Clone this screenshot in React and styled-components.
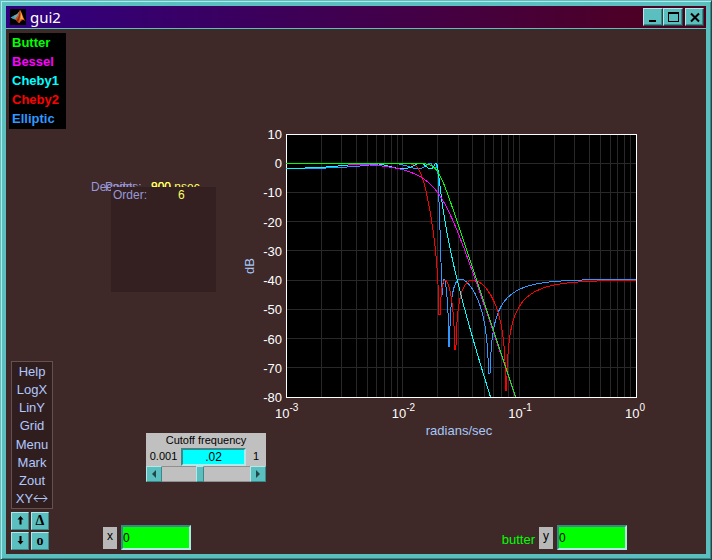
import { useState } from 'react';
import styled, { createGlobalStyle } from 'styled-components';

const GlobalStyle = createGlobalStyle`
  * {
    box-sizing: border-box;
  }
  body {
    margin: 0;
    background: #3e2828;
    font-family: "Liberation Sans", Arial, sans-serif;
    font-size: 13px;
  }
  button, input {
    font-family: inherit;
    margin: 0;
    padding: 0;
  }
`;

const Window = styled.div`
  display: flex;
  flex-direction: column;
  min-height: 100vh;
  border: 1px solid;
  border-color: #5cbfbf #204848 #204848 #5cbfbf;
  box-shadow: inset 1px 1px #b4e8e8, inset -1px -1px #3c8888;
  padding: 5px;
  background: #5cbfbf;
`;

const TitleBar = styled.header`
  display: flex;
  align-items: center;
  height: 22px;
  padding: 0 2px 0 4px;
  background: linear-gradient(to right, #300080, #50001c);
  color: #fff;
`;

const Title = styled.h1`
  flex: 1;
  margin: 0 0 0 4px;
  font: 15px/20px "Noto Sans", sans-serif;
`;

const WindowButton = styled.button`
  width: ${({ $wide }) => ($wide ? '20px' : '19px')};
  height: 18px;
  margin-left: ${({ $gap }) => ($gap ? '2px' : '0')};
  border: 1px solid;
  border-color: #b4e8e8 #204848 #204848 #b4e8e8;
  box-shadow: inset -1px -1px #3c8888;
  background: #5cbfbf;
  line-height: 0;
`;

const Body = styled.div`
  display: flex;
  flex: 1;
  margin-top: 1px;
  background: #3e2828;
`;

const Sidebar = styled.aside`
  display: flex;
  flex-direction: column;
  justify-content: space-between;
  padding: 4px 0 4px 3px;
`;

const Legend = styled.ul`
  width: 57px;
  margin: 0;
  padding: 0 0 1px 3px;
  list-style: none;
  background: #000;
  font-weight: bold;
  line-height: 19px;
`;

const LegendItem = styled.li`
  color: ${({ $color }) => $color};
`;

const Tools = styled.div`
  width: 42px;
  margin-left: 2px;
`;

const Menu = styled.nav`
  display: flex;
  flex-direction: column;
  min-height: 148px;
  margin-bottom: 3px;
  border: 1px solid #685050;
  background: #301e1e;
`;

const MenuButton = styled.button`
  display: flex;
  flex: 1;
  align-items: center;
  justify-content: center;
  border: 0;
  background: none;
  color: #b0c8ff;
  font-size: 13px;
`;

const KeyPad = styled.div`
  display: grid;
  grid-template-columns: 18px 18px;
  gap: 2px;
`;

const Key = styled.button`
  height: 18px;
  border: 1px solid;
  border-color: #b4e8e8 #3c8888 #3c8888 #b4e8e8;
  background: #5cbfbf;
  color: #000;
  font: bold 14px/14px "Liberation Serif", serif;
`;

const Main = styled.main`
  display: flex;
  flex: 1;
  flex-direction: column;
  justify-content: space-between;
  padding: 94px 0 4px;
`;

const Workspace = styled.div`
  display: grid;
  grid-template-columns: 174px 32px 1fr;
`;

const Controls = styled.div`
  grid-column: 1 / 3;
  grid-row: 1;
  z-index: 1;
  padding-top: 64px;
`;

const Info = styled.div`
  position: relative;
  width: 105px;
  height: 105px;
  margin-left: 45px;
  color: #9898d8;
  font-size: 12px;
`;

const InfoLine = styled.div`
  position: absolute;
  top: -7px;
  left: ${({ $left }) => $left};
  display: flex;
  white-space: pre;
  line-height: 14px;
`;

const InfoCard = styled.div`
  position: relative;
  display: flex;
  height: 100%;
  padding: 1px 2px;
  background: #342020;
  line-height: 14px;
`;

const InfoLabel = styled.span`
  width: ${({ $width }) => $width};
`;

const InfoValue = styled.span`
  color: #ffff60;
`;

const CutoffPanel = styled.div`
  width: 120px;
  margin: 141px 0 0 80px;
  background: #c0c0c0;
  color: #000;
  font-size: 11px;
  text-align: center;
`;

const CutoffLabel = styled.label`
  display: block;
  line-height: 15px;
`;

const CutoffRow = styled.div`
  display: grid;
  grid-template-columns: 35px 1fr 20px;
  height: 18px;
  line-height: 17px;
`;

const CutoffInput = styled.input`
  width: 100%;
  height: 18px;
  border: 2px solid;
  border-color: #3c8888 #b4e8e8 #b4e8e8 #3c8888;
  background: #00ffff;
  color: #000;
  font-size: 12px;
  text-align: center;
`;

const SliderRow = styled.div`
  display: flex;
  height: 16px;
`;

const ArrowButton = styled.button`
  width: 16px;
  border: 1px solid;
  border-color: #b4e8e8 #3c8888 #3c8888 #b4e8e8;
  background: #5cbfbf;
  line-height: 0;
`;

const Slider = styled.input`
  flex: 1;
  min-width: 0;
  appearance: none;
  border: solid #909090;
  border-width: 1px 0;
  background: #c0c0c0;

  &::-webkit-slider-thumb {
    appearance: none;
    width: 8px;
    height: 16px;
    border: 1px solid;
    border-color: #b4e8e8 #3c8888 #3c8888 #b4e8e8;
    background: #5cbfbf;
  }
`;

const Chart = styled.svg`
  display: block;
  grid-column: 2 / 4;
  grid-row: 1;
  width: 100%;
  font-size: 13px;
`;

const Readouts = styled.footer`
  display: flex;
  justify-content: space-between;
  padding: 0 79px 0 37px;
`;

const Readout = styled.div`
  display: flex;
  align-items: center;
`;

const TraceName = styled.span`
  margin-right: 4px;
  padding-top: 4px;
  color: #00ff00;
`;

const AxisLabel = styled.label`
  width: 14px;
  height: 22px;
  margin-right: 4px;
  background: #b8b8b8;
  color: #000;
  font-size: 12px;
  line-height: 19px;
  text-align: center;
`;

const AxisInput = styled.input`
  width: 70px;
  height: 25px;
  border: 2px solid;
  border-color: #3c8888 #b4e8e8 #b4e8e8 #3c8888;
  background: #00ff00;
  color: #000;
  font-size: 12px;
`;

const PLOT = { left: 46, top: 11, width: 350, height: 263 };
const ORDER = 6;
const CUTOFF = 0.02;

const toX = (w) => PLOT.left + ((Math.log10(w) + 3) / 3) * PLOT.width;
const toY = (db) => PLOT.top + ((10 - db) / 90) * PLOT.height;

const cheby = (n, x) =>
  Math.abs(x) <= 1 ? Math.cos(n * Math.acos(x)) : Math.cosh(n * Math.acosh(x));

const butter = (w) => -10 * Math.log10(1 + Math.pow(w, 2 * ORDER));

const bessel = (w) => {
  const u = w * Math.pow(10395, 1 / 6);
  const re = 10395 - 4725 * u ** 2 + 210 * u ** 4 - u ** 6;
  const im = 10395 * u - 1260 * u ** 3 + 21 * u ** 5;
  return 20 * Math.log10(10395 / Math.hypot(re, im));
};

const cheby1 = (w) => -10 * Math.log10(1 + 0.55 * cheby(ORDER, w) ** 2);

const cheby2 = (w) => -10 * Math.log10(1 + 9999 / cheby(ORDER, 1 / w) ** 2);

const rational = (w) =>
  [0.3882, 0.8565, 0.9885].reduce(
    (acc, p) => (acc * (w * w - p * p)) / (w * w - (1.073 / p) ** 2),
    1
  );
const elliptic = (w) => -10 * Math.log10(1 + 0.55 * (rational(w) / rational(1)) ** 2);

// how far down each notch is drawn, by the x where the next one begins
const floorAt = (x, floors) => floors.find(([end]) => x < end)[1];

const trace = (response, floors = [[Infinity, -80]]) => {
  const points = [];
  for (let x = PLOT.left; x <= PLOT.left + PLOT.width; x += 1) {
    const w = Math.pow(10, ((x - PLOT.left) / PLOT.width) * 3 - 3);
    const db = response(w / CUTOFF);
    points.push(`${x},${toY(Math.max(db, floorAt(x, floors))).toFixed(1)}`);
    if (db < -80 && floors.length === 1) break;
  }
  return points.join(' ');
};

const filters = [
  { name: 'Butter', color: '#00ff00', points: trace(butter) },
  { name: 'Bessel', color: '#ff00ff', points: trace(bessel) },
  { name: 'Cheby1', color: '#00ffff', points: trace(cheby1) },
  {
    name: 'Cheby2',
    color: '#ff0000',
    points: trace(cheby2, [[206, -52], [230, -64], [Infinity, -78]]),
  },
  {
    name: 'Elliptic',
    color: '#3098ff',
    points: trace(elliptic, [[205, -45], [225, -63], [Infinity, -72]]),
  },
];

const levels = [10, 0, -10, -20, -30, -40, -50, -60, -70, -80];
const decades = [-3, -2, -1, 0];
const gridX = [-3, -2, -1].flatMap((d) =>
  [1, 2, 3, 4, 5, 6, 7, 8, 9].map((n) => n * 10 ** d)
);

const menuItems = ['Help', 'LogX', 'LinY', 'Grid', 'Menu', 'Mark', 'Zout'];

const MatlabIcon = () => (
  <svg width="16" height="16" viewBox="0 0 16 16" aria-hidden="true">
    <rect width="16" height="16" fill="#000" />
    <path d="M0.5 8.5 4 6.5 6.5 7.5 5 10.5 3 10Z" fill="#4898b8" />
    <path d="M4 6.5 7 5 10 1.5 8 7 5 10.5Z" fill="#70a8b0" />
    <path d="M10 1C11 1 12.5 7 15.5 12.5 13 10 11.5 11 9.5 14 8 14.5 7 11 4.5 10.5 7.5 9.5 8.5 3 10 1Z" fill="#d85818" />
    <path d="M10 1C9.5 5 9 9 6 11.5L8 13.5C10 10 10.5 5 10 1Z" fill="#902818" />
    <path d="M10.5 2C12 5 12 8 14 11 12 9 11 10 10 11 11 8 11 5 10.5 2Z" fill="#ffb848" />
  </svg>
);

const ResponseChart = () => (
  <Chart viewBox="0 0 466 318" role="img" aria-label="Filter response">
    <g shapeRendering="crispEdges">
      <rect x={PLOT.left} y={PLOT.top} width={PLOT.width} height={PLOT.height} fill="#000" />
      <g stroke="#282828">
        {gridX.map((w) => (
          <line key={w} x1={toX(w)} x2={toX(w)} y1={PLOT.top} y2={PLOT.top + PLOT.height} />
        ))}
        {levels.map((db) => (
          <line key={db} x1={PLOT.left} x2={PLOT.left + PLOT.width} y1={toY(db)} y2={toY(db)} />
        ))}
      </g>
      <rect
        x={PLOT.left}
        y={PLOT.top}
        width={PLOT.width}
        height={PLOT.height}
        fill="none"
        stroke="#fff"
      />
      <clipPath id="plot">
        <rect x={PLOT.left} y={PLOT.top} width={PLOT.width} height={PLOT.height} />
      </clipPath>
      <g clipPath="url(#plot)">
        {[...filters].reverse().map(({ name, color, points }) => (
          <polyline key={name} points={points} fill="none" stroke={color} />
        ))}
      </g>
    </g>
    <g fill="#fff" textAnchor="end">
      {levels.map((db) => (
        <text key={db} x="42" y={toY(db) + 5}>{db}</text>
      ))}
    </g>
    <g fill="#fff">
      {decades.map((d) => (
        <text key={d} x={toX(10 ** d) - 11} y="295">
          10<tspan dy="-7" fontSize="10">{d}</tspan>
        </text>
      ))}
    </g>
    <g fill="#a8c8f8" textAnchor="middle">
      <text x="219" y="312">radians/sec</text>
      <text transform="translate(14 143) rotate(-90)">dB</text>
    </g>
  </Chart>
);

const App = () => {
  const [cutoff, setCutoff] = useState('.02');
  const [position, setPosition] = useState(43);
  const [xValue, setXValue] = useState('0');
  const [yValue, setYValue] = useState('0');

  const moveTo = (next) => {
    const value = Math.min(100, Math.max(0, next));
    setPosition(value);
    setCutoff(Math.pow(10, (value * 3) / 100 - 3).toPrecision(2));
  };

  return (
    <>
      <GlobalStyle />
      <Window>
        <TitleBar>
          <MatlabIcon />
          <Title>gui2</Title>
          <WindowButton $wide aria-label="Minimize">
            <svg width="16" height="14" viewBox="0 0 16 14">
              <path d="M4 10h7v2H4z" />
            </svg>
          </WindowButton>
          <WindowButton $wide aria-label="Maximize">
            <svg width="16" height="14" viewBox="0 0 16 14" shapeRendering="crispEdges">
              <path d="M3 2h11v10H3zM4 4v7h9V4z" fillRule="evenodd" />
            </svg>
          </WindowButton>
          <WindowButton $gap aria-label="Close">
            <svg width="16" height="14" viewBox="0 0 16 14">
              <path d="M4 3.5l8 8M12 3.5l-8 8" stroke="#000" strokeWidth="2" />
            </svg>
          </WindowButton>
        </TitleBar>
        <Body>
          <Sidebar>
            <Legend>
              {filters.map(({ name, color }) => (
                <LegendItem key={name} $color={color}>{name}</LegendItem>
              ))}
            </Legend>
            <Tools>
              <Menu>
                {menuItems.map((item) => (
                  <MenuButton key={item}>{item}</MenuButton>
                ))}
                <MenuButton>
                  XY
                  <svg width="15" height="9" viewBox="0 0 15 9" fill="none" stroke="currentColor">
                    <path d="M1 4.5h13M4.5 1 1 4.5 4.5 8M10.5 1 14 4.5 10.5 8" />
                  </svg>
                </MenuButton>
              </Menu>
              <KeyPad>
                <Key aria-label="Up">
                  <svg width="9" height="10" viewBox="0 0 9 10">
                    <path d="M4.5 1 7.5 4.5H5.5v5h-2v-5h-2z" />
                  </svg>
                </Key>
                <Key>Δ</Key>
                <Key aria-label="Down">
                  <svg width="9" height="10" viewBox="0 0 9 10">
                    <path d="M4.5 9.5 7.5 6H5.5V1h-2v5h-2z" />
                  </svg>
                </Key>
                <Key>o</Key>
              </KeyPad>
            </Tools>
          </Sidebar>
          <Main>
            <Workspace>
              <Controls>
                <Info>
                  <InfoLine $left="-20px">
                    <InfoLabel $width="60px">Decade:</InfoLabel>
                    <InfoValue>800 nsec</InfoValue>
                  </InfoLine>
                  <InfoLine $left="-6px">
                    <InfoLabel $width="46px">Points:</InfoLabel>
                    <InfoValue>900</InfoValue>
                  </InfoLine>
                  <InfoCard>
                    <InfoLabel $width="65px">Order:</InfoLabel>
                    <InfoValue>6</InfoValue>
                  </InfoCard>
                </Info>
                <CutoffPanel>
                  <CutoffLabel htmlFor="cutoff">Cutoff frequency</CutoffLabel>
                  <CutoffRow>
                    <span>0.001</span>
                    <CutoffInput
                      id="cutoff"
                      value={cutoff}
                      onChange={(e) => setCutoff(e.target.value)}
                    />
                    <span>1</span>
                  </CutoffRow>
                  <SliderRow>
                    <ArrowButton aria-label="Decrease" onClick={() => moveTo(position - 1)}>
                      <svg width="8" height="8" viewBox="0 0 8 8">
                        <path d="M6 0v8L2 4z" fill="#204848" />
                      </svg>
                    </ArrowButton>
                    <Slider
                      type="range"
                      aria-label="Cutoff frequency"
                      value={position}
                      onChange={(e) => moveTo(Number(e.target.value))}
                    />
                    <ArrowButton aria-label="Increase" onClick={() => moveTo(position + 1)}>
                      <svg width="8" height="8" viewBox="0 0 8 8">
                        <path d="M2 0v8l4-4z" fill="#204848" />
                      </svg>
                    </ArrowButton>
                  </SliderRow>
                </CutoffPanel>
              </Controls>
              <ResponseChart />
            </Workspace>
            <Readouts>
              <Readout>
                <AxisLabel htmlFor="x-value">x</AxisLabel>
                <AxisInput
                  id="x-value"
                  value={xValue}
                  onChange={(e) => setXValue(e.target.value)}
                />
              </Readout>
              <Readout>
                <TraceName>butter</TraceName>
                <AxisLabel htmlFor="y-value">y</AxisLabel>
                <AxisInput
                  id="y-value"
                  value={yValue}
                  onChange={(e) => setYValue(e.target.value)}
                />
              </Readout>
            </Readouts>
          </Main>
        </Body>
      </Window>
    </>
  );
};

export default App;
